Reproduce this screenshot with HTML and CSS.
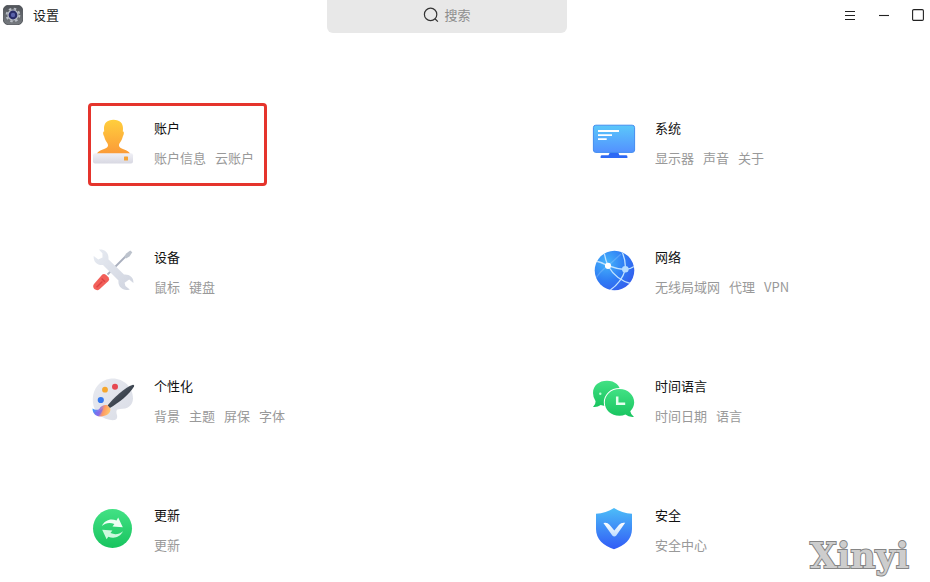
FILE: index.html
```html
<!DOCTYPE html>
<html lang="zh-CN">
<head>
<meta charset="utf-8">
<title>设置</title>
<link rel="stylesheet" href="styles.css">
</head>
<body>
<header class="titlebar">
  <div class="brand">
    <svg class="brand-icon" width="20" height="20" viewBox="0 0 20 20">
      <defs>
        <linearGradient id="app" x1="0" y1="0" x2="0" y2="1"><stop offset="0" stop-color="#50545a"/><stop offset="1" stop-color="#777b80"/></linearGradient>
      </defs>
      <rect x=".4" y=".4" width="19.2" height="19.2" rx="4.6" fill="url(#app)" stroke="#44474d" stroke-width=".8"/>
      <circle cx="10" cy="10" r="6.4" fill="none" stroke="#b9bdc6" stroke-width="1.9" stroke-dasharray="2.5 2.53"/>
      <circle cx="10" cy="10" r="5.6" fill="#b9bdc6"/>
      <circle cx="10" cy="10" r="4.4" fill="#282b68"/>
      <circle cx="10" cy="10" r="2.2" fill="#5961aa"/>
    </svg>
    <h1 class="brand-name">设置</h1>
  </div>
  <div class="search">
    <svg width="16" height="16" viewBox="0 0 16 16" fill="none" stroke="#333" stroke-width="1.2"><circle cx="7.6" cy="7.4" r="6.2"/><path d="M12.2 12l2.7 2.6"/></svg>
    <span>搜索</span>
  </div>
  <div class="controls">
    <svg width="12" height="12" viewBox="0 0 12 12"><path d="M1 2.5h10M1 6.5h10M1 10.5h10" stroke="#222" stroke-width="1.1"/></svg>
    <svg width="12" height="12" viewBox="0 0 12 12"><path d="M1 6.5h10" stroke="#222" stroke-width="1.1"/></svg>
    <svg width="12" height="12" viewBox="0 0 12 12"><rect x=".6" y=".6" width="10.8" height="10.8" rx="1.2" fill="none" stroke="#222" stroke-width="1.1"/></svg>
  </div>
</header>

<main class="modules">
  <section class="module selected">
    <svg class="icon" viewBox="0 0 48 48">
      <defs>
        <linearGradient id="person" x1="0" y1="0" x2="0" y2="1"><stop offset="0" stop-color="#ffcf3d"/><stop offset="1" stop-color="#fb9a38"/></linearGradient>
        <linearGradient id="base" x1="0" y1="0" x2="0" y2="1"><stop offset="0" stop-color="#f0f0f6"/><stop offset="1" stop-color="#d8d8e2"/></linearGradient>
      </defs>
      <path d="M24.5 2.8C18 2.8 14.8 6.4 15 12L15.2 14.5C13.7 14.4 13.8 17 15.2 19.5C16.3 24.5 19.3 26 19 28.8C18.5 32.7 9.5 32.4 7.7 37H41.3C39.5 32.4 30.5 32.7 30 28.8C29.7 26 32.7 24.5 33.8 19.5C35.2 17 35.3 14.4 33.8 14.5L34 12C34.2 6.4 31 2.8 24.5 2.8Z" fill="url(#person)"/>
      <rect x="4" y="36.2" width="40" height="10.2" rx="2" fill="url(#base)"/>
      <rect x="35" y="39.5" width="4" height="4" rx=".6" fill="#f6a436"/>
    </svg>
    <div class="text"><h2>账户</h2><p><span>账户信息</span><span>云账户</span></p></div>
  </section>

  <section class="module">
    <svg class="icon" viewBox="0 0 48 48">
      <defs>
        <linearGradient id="screen" x1="0" y1="0" x2="0" y2="1"><stop offset="0" stop-color="#5bc8fa"/><stop offset="1" stop-color="#5391ff"/></linearGradient>
      </defs>
      <path d="M20 35h8l1.5 3.2h6.5a1.4 1.4 0 0 1 1.4 1.4V41H10.6v-1.4a1.4 1.4 0 0 1 1.4-1.4h6.5Z" fill="#2d69f5"/>
      <rect x="3.4" y="8.2" width="41.2" height="27.2" rx="2.4" fill="url(#screen)" stroke="#438df0"/>
      <path d="M8 14h21M8 18.1h14M8 22.2h8.7" stroke="#fff" stroke-width="1.8"/>
    </svg>
    <div class="text"><h2>系统</h2><p><span>显示器</span><span>声音</span><span>关于</span></p></div>
  </section>

  <section class="module">
    <svg class="icon" viewBox="0 0 48 48">
      <defs>
        <linearGradient id="steel" x1="0" y1="0" x2="1" y2="1"><stop offset="0" stop-color="#e7ebf2"/><stop offset="1" stop-color="#d0d4df"/></linearGradient>
      </defs>
      <path d="M18.5 28.5L36.5 10.5" stroke="#a9afbd" stroke-width="1.8"/>
      <path d="M35 10.8L37.2 7.6 41.2 4.4 43.3 6.3 40.5 10.5 37 12.5Z" fill="#bdc3cd"/>
      <path d="M10 3.7C15.5 2.8 20.3 7.2 19.4 13.3L35 28.5C40.7 28 44.8 31.5 44.4 37L40.2 33.4 35.6 36.7 36.4 40 40.8 43.4C34.5 45.8 28.6 40.8 29.5 34.5L14 19C8.2 19.6 4.2 15.6 4.7 10L9.3 13.6 13.5 11.4 13.4 7.2Z" fill="url(#steel)"/>
      <path d="M13.3 28.6Q15 27.2 17.2 29L19.4 31.2Q21 33.2 19.5 35L10.5 43.3Q8.3 45.2 5.3 43.1Q3.2 40.4 5 38Z" fill="#f2605a"/>
      <path d="M7.6 41.3L13.4 35.5M12.6 32.4l3.3 3.3" stroke="#dc4244" stroke-width="1.4"/>
    </svg>
    <div class="text"><h2>设备</h2><p><span>鼠标</span><span>键盘</span></p></div>
  </section>

  <section class="module">
    <svg class="icon" viewBox="0 0 48 48">
      <defs>
        <radialGradient id="globe" cx=".3" cy=".3" r=".85"><stop offset="0" stop-color="#46b5fb"/><stop offset=".55" stop-color="#2f7cf4"/><stop offset="1" stop-color="#3458ec"/></radialGradient>
        <clipPath id="globe-clip"><circle cx="24.5" cy="24.5" r="19.8"/></clipPath>
      </defs>
      <circle cx="24.5" cy="24.5" r="19.8" fill="url(#globe)"/>
      <g clip-path="url(#globe-clip)" fill="none" stroke="#c0e2ff" stroke-width="1.3">
        <path d="M4 14.5Q11 16 18 19.7Q27 23.2 35.3 23.3Q41 23 45 20"/>
        <path d="M14 5Q15 13 18 19.7Q26 34 42 38"/>
        <path d="M31 4Q36 13 35.3 23.3Q32 36 19 45"/>
        <path d="M18 19.7Q9 26 5 34M18 19.7L31 8" opacity=".25"/>
      </g>
      <circle cx="18" cy="19.8" r="3.1" fill="#fff"/><circle cx="35.3" cy="23.3" r="3.3" fill="#b5dcff"/>
    </svg>
    <div class="text"><h2>网络</h2><p><span>无线局域网</span><span>代理</span><span>VPN</span></p></div>
  </section>

  <section class="module">
    <svg class="icon" viewBox="0 0 48 48">
      <defs>
        <linearGradient id="palette" x1="0" y1="0" x2="1" y2="1"><stop offset="0" stop-color="#e8eaf0"/><stop offset="1" stop-color="#dadde6"/></linearGradient>
        <linearGradient id="bristle" x1="0" y1="0" x2="1" y2=".2"><stop offset="0" stop-color="#23a2ff"/><stop offset=".45" stop-color="#9277e8"/><stop offset=".7" stop-color="#ff9b62"/><stop offset="1" stop-color="#ffc36c"/></linearGradient>
        <linearGradient id="handle" x1="0" y1="0" x2="1" y2="1"><stop offset="0" stop-color="#606873"/><stop offset="1" stop-color="#202832"/></linearGradient>
      </defs>
      <path d="M21 3.7C33 2 44.3 11.5 44 23.5C43.8 31 38.5 34 31 34C26.5 34 27.2 37 28 40C29 44.5 26 46 20.5 44.8C9.5 42.5 3.2 34 3.8 23.5C4.3 13 11.2 5 21 3.7Z" fill="url(#palette)"/>
      <circle cx="16" cy="14.7" r="2.9" fill="#f6a72e"/><circle cx="26" cy="11.8" r="3" fill="#e64850"/><circle cx="11.8" cy="25" r="3.1" fill="#3478ee"/>
      <path d="M18.5 30.5C25 22.5 35.5 12.6 44 9.8Q45.7 9.7 45 11.5C41 19 29.5 28 20.8 33Z" fill="url(#handle)"/>
      <path d="M18.3 30.3C15.5 29.2 12 31 10.6 33.4C8.5 35.7 6 35 3.5 33.4C3.7 40 8.8 42.2 13.5 41.3C19 40.3 22 37.5 21.3 33.5Z" fill="url(#bristle)"/>
      <path d="M5 36.8Q10 37.5 14 33Q13 38.5 9 41.2Q6 39.5 5 36.8Z" fill="#7b66ed" opacity=".65"/>
    </svg>
    <div class="text"><h2>个性化</h2><p><span>背景</span><span>主题</span><span>屏保</span><span>字体</span></p></div>
  </section>

  <section class="module">
    <svg class="icon" viewBox="0 0 48 48">
      <defs>
        <linearGradient id="chat" x1="0" y1="0" x2="0" y2="1"><stop offset="0" stop-color="#42e184"/><stop offset="1" stop-color="#18c45f"/></linearGradient>
      </defs>
      <path d="M17 5.8C25 5.8 30.6 10.5 30.6 18S25 31 17 31Q13.5 31 10.7 29.9Q7.5 32.4 3 31.9Q5.8 29.5 5.6 26.2Q3 22.9 3 18C3 10.5 9 5.8 17 5.8Z" fill="url(#chat)"/>
      <circle cx="10.3" cy="18.7" r="1.2" fill="#baffd5"/>
      <path d="M29.5 14C38 14 44.2 20 44.2 27.5Q44 32.4 40.3 36.3Q40.8 39.8 44 42Q38.8 42.5 35.4 39.6Q32.8 40.8 29.5 40.8C21 40.8 14.8 35 14.8 27.5S21 14 29.5 14Z" fill="url(#chat)" stroke="#fff" stroke-width="2" paint-order="stroke"/>
      <path d="M27.2 21.4v7.4h8" fill="none" stroke="#e4ffee" stroke-width="2.5"/>
    </svg>
    <div class="text"><h2>时间语言</h2><p><span>时间日期</span><span>语言</span></p></div>
  </section>

  <section class="module">
    <svg class="icon" viewBox="0 0 48 48">
      <circle cx="23.5" cy="24.5" r="19.5" fill="url(#chat)"/>
      <path d="M12.8 22C15.7 16.3 21.5 14.2 27.5 16.5L29.2 13.5 33.8 23.3 23.5 22.6 25.4 20.1C20.7 18.2 16.5 19 12.8 22Z" fill="#edfff4"/>
      <path d="M34 27.2C31.1 33 25.3 35 19.3 32.7L17.6 35.2 13.2 25.7 23.4 26.5 21.5 29.1C26.2 31 30.4 30.2 34 27.2Z" fill="#cdf9df"/>
    </svg>
    <div class="text"><h2>更新</h2><p><span>更新</span></p></div>
  </section>

  <section class="module">
    <svg class="icon" viewBox="0 0 48 48">
      <defs>
        <linearGradient id="shield" x1="0" y1="0" x2="0" y2="1"><stop offset="0" stop-color="#4dbdf8"/><stop offset="1" stop-color="#315bf6"/></linearGradient>
        <linearGradient id="tick" x1="0" y1="0" x2="0" y2="1"><stop offset="0" stop-color="#fff"/><stop offset="1" stop-color="#bddcff"/></linearGradient>
      </defs>
      <path d="M24 4C29 7.2 35.5 9.6 42 9.8V25C42 35 34.5 42 24 45.2C13.5 42 6 35 6 25V9.8C12.5 9.6 19 7.2 24 4Z" fill="url(#shield)"/>
      <path d="M13.4 19.1Q17.3 18.2 19.5 20.8L24.3 26.5 29.1 20.7Q31.4 18.1 35.2 18.8L26.3 31.4Q24.3 33.6 22.3 31.4Z" fill="url(#tick)"/>
    </svg>
    <div class="text"><h2>安全</h2><p><span>安全中心</span></p></div>
  </section>
</main>

<svg class="watermark" width="110" height="48" viewBox="0 0 110 48"><text x="5" y="34" textLength="99" lengthAdjust="spacingAndGlyphs">Xinyi</text></svg>
</body>
</html>
```
FILE: styles.css
```css
* { box-sizing: border-box; }
body {
  margin: 0;
  height: 582px;
  overflow: hidden;
  position: relative;
  background: #fff;
  color: #1b1b1b;
  font: 13px/20px "Noto Sans CJK SC", sans-serif;
}
h1, h2, p { margin: 0; font-size: 13px; font-weight: 400; }
svg { display: block; flex: none; }

.titlebar {
  display: grid;
  grid-template-columns: 327px 240px 1fr;
  height: 33px;
}
.brand { display: flex; gap: 10px; padding: 5px 0 0 3px; }
.search {
  display: flex;
  justify-content: center;
  gap: 5px;
  padding-top: 5px;
  border-radius: 0 0 6px 6px;
  background: #e8e8e8;
  color: #8e8e8e;
}
.search svg { margin-top: 2px; }
.controls {
  display: flex;
  justify-content: flex-end;
  gap: 22px;
  padding: 9px 6px 0 0;
}

.modules {
  display: grid;
  grid-template-columns: 501px 1fr;
  grid-template-rows: repeat(3, 129px) 90px;
  padding: 71px 0 0 89px;
}
.module {
  position: relative;
  display: flex;
  align-items: flex-start;
  gap: 17px;
  padding-top: 13px;
}
.icon { width: 48px; height: 48px; }
.text { padding-top: 1px; }
.text h2 { color: #111; }
.text p {
  display: flex;
  gap: 9px;
  margin-top: 10px;
  color: #999;
}
.selected::after {
  content: "";
  box-sizing: border-box;
  position: absolute;
  left: -1px;
  top: -1px;
  width: 179px;
  height: 83px;
  border: 3px solid #e5342c;
  border-radius: 4px;
}

.watermark {
  position: absolute;
  left: 805px;
  top: 534px;
  font: bold 36px "DejaVu Serif", serif;
  fill: #cdcdcd;
  stroke: #858585;
  stroke-width: 2px;
  paint-order: stroke;
}
```
